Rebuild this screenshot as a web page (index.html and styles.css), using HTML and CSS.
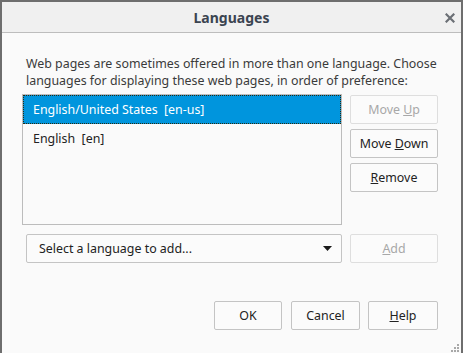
FILE: index.html
```html
<!DOCTYPE html>
<html>
<head>
<meta charset="utf-8">
<link rel="stylesheet" href="styles.css">
</head>
<body>
<div class="dialog">
  <div class="titlebar">
    <span class="title">Languages</span>
    <span class="close">
      <svg width="10" height="10" viewBox="0 0 10 10"><path d="M1.5 1.5 L8.5 8.5 M8.5 1.5 L1.5 8.5" stroke="#6b6f75" stroke-width="2.2" stroke-linecap="square"/></svg>
    </span>
  </div>
  <div class="content">
    <p class="intro">Web pages are sometimes offered in more than one language. Choose languages for displaying these web pages, in order of preference:</p>
    <div class="list-row">
      <div class="listbox">
        <div class="item selected">English/United States&nbsp; [en-us]</div>
        <div class="item">English&nbsp; [en]</div>
      </div>
      <div class="side-buttons">
        <button class="btn disabled">Move <u>U</u>p</button>
        <button class="btn">Move <u>D</u>own</button>
        <button class="btn"><u>R</u>emove</button>
      </div>
    </div>
    <div class="add-row">
      <div class="select">
        <span>Select a language to add...</span>
        <svg class="arrow" width="9" height="5" viewBox="0 0 9 5"><path d="M0 0 H9 L4.5 5 Z" fill="#1a1a1a"/></svg>
      </div>
      <button class="btn disabled add"><u>A</u>dd</button>
    </div>
    <div class="footer">
      <button class="btn ok">OK</button>
      <button class="btn cancel">Cancel</button>
      <button class="btn help"><u>H</u>elp</button>
    </div>
  </div>
  <div class="grip">
    <svg width="10" height="10" viewBox="0 0 10 10" fill="#a8a8a8">
      <rect x="7" y="1" width="2" height="2"/>
      <rect x="4" y="4" width="2" height="2"/><rect x="7" y="4" width="2" height="2"/>
      <rect x="1" y="7" width="2" height="2"/><rect x="4" y="7" width="2" height="2"/><rect x="7" y="7" width="2" height="2"/>
    </svg>
  </div>
</div>
</body>
</html>
```

FILE: styles.css
```css
* { box-sizing: border-box; }
html, body { margin: 0; padding: 0; }
body {
  width: 463px;
  height: 353px;
  background: #6e6e6e;
  padding: 2px 2px 0 2px;
  font-family: "Noto Sans", "Open Sans", sans-serif;
  font-size: 12.4px;
  color: #2b2b2b;
  overflow: hidden;
}
.dialog {
  position: relative;
  height: 351px;
  background: #fafafa;
  display: flex;
  flex-direction: column;
}
.titlebar {
  height: 31px;
  background: #f0f0f0;
  border-bottom: 1px solid #bdbdbd;
  display: flex;
  align-items: center;
  justify-content: center;
  position: relative;
}
.title {
  font-weight: bold;
  font-size: 14px;
  color: #3b4450;
  margin-top: 1px;
}
.close {
  position: absolute;
  right: 6px;
  top: 11px;
  width: 10px;
  height: 10px;
  display: flex;
}
.content {
  padding: 23px 23px 0 20px;
  display: flex;
  flex-direction: column;
}
.intro {
  margin: 0 0 5px 4px;
  line-height: 16.5px;
  color: #3a3a3a;
}
.list-row {
  display: flex;
  gap: 8px;
}
.listbox {
  width: 320px;
  height: 131px;
  border: 1px solid #bcbcbc;
  background: #fafafa;
}
.item {
  height: 29px;
  line-height: 27px;
  padding-left: 9px;
  color: #222;
  border: 1px solid transparent;
}
.item.selected {
  background: #0095dd;
  color: #fff;
  border: 1px dotted #2a2a10;
}
.side-buttons {
  display: flex;
  flex-direction: column;
  gap: 5px;
  padding-top: 1px;
}
.btn {
  font-family: inherit;
  font-size: 12.4px;
  color: #222;
  width: 88px;
  height: 29px;
  background: #fbfbfb;
  border: 1px solid #c4c4c4;
  border-radius: 2px;
  padding: 0;
  margin: 0;
}
.btn.disabled {
  color: #a8a8a8;
  border-color: #dedede;
}
.add-row {
  display: flex;
  gap: 8px;
  margin-top: 9px;
  margin-left: 4px;
}
.select {
  width: 316px;
  height: 29px;
  border: 1px solid #c4c4c4;
  border-radius: 2px;
  background: #fbfbfb;
  display: flex;
  align-items: center;
  justify-content: space-between;
  padding: 0 9px 0 12px;
  color: #222;
}
.arrow { display: block; }
.footer {
  display: flex;
  justify-content: flex-end;
  margin-top: 38px;
}
.footer .ok { width: 68px; }
.footer .cancel { width: 69px; margin-left: 9px; }
.footer .help { width: 70px; margin-left: 8px; }
.grip {
  position: absolute;
  right: 1px;
  bottom: 0;
  width: 10px;
  height: 10px;
}
.grip svg { display: block; }
```
